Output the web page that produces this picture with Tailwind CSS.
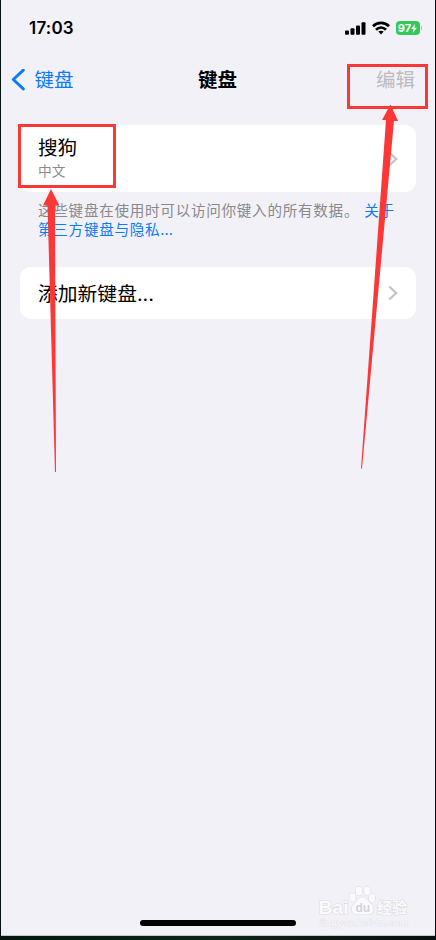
<!DOCTYPE html>
<html lang="zh-CN">
<head>
<meta charset="utf-8">
<title>键盘</title>
<script src="https://cdn.jsdelivr.net/npm/@tailwindcss/browser@4"></script>
</head>
<body class="w-[436px] h-[940px] overflow-hidden bg-[#07110f] font-['Inter','Noto_Sans_CJK_SC',sans-serif]">
<div class="relative flex flex-col w-[436px] h-[940px]">
  <main class="flex flex-col h-[936px] ml-px w-[434px] bg-[#f2f1f7] border-b border-[#c8c8cc]">
    <!-- Status bar -->
    <header class="flex items-center justify-between h-14 pl-[28px] pr-[13px]">
      <span class="text-[17px] leading-6 font-semibold tracking-[0.2px] text-black">17:03</span>
      <div class="flex items-center gap-[6px]">
        <svg class="w-[21px] h-[13px]" viewBox="0 0 21 13"><rect x="0" y="8.6" width="4" height="4.2" rx="1"/><rect x="5.5" y="6.2" width="4" height="6.6" rx="1"/><rect x="11" y="3.4" width="4" height="9.4" rx="1"/><rect x="16.5" y="0.3" width="4" height="12.5" rx="1"/></svg>
        <svg class="w-[18px] h-[14px]" viewBox="0 0 18 14" fill="none" stroke="#000" stroke-width="2.7"><path d="M1 5.2C5.5 .7 12.5 .7 17 5.2"/><path d="M4 8.7C7 5.8 11 5.8 14 8.700"/><path d="M9 13.4 6.3 10.6Q9 8.7 11.7 10.6Z" fill="#000" stroke="none"/></svg>
        <div class="flex items-center gap-px">
          <div class="flex items-center justify-center w-[24px] h-[14px] rounded-[4px] bg-[#34c759] text-white">
            <span class="text-[11px] leading-none font-bold">97</span>
            <svg class="w-[6px] h-[9px]" viewBox="0 0 6 9" fill="#fff"><path d="M4 0 .2 5h2.3L1.8 9 5.9 3.7H3.5Z"/></svg>
          </div>
          <span class="w-[1.5px] h-[4px] rounded-r bg-[#b5b5ba]"></span>
        </div>
      </div>
    </header>

    <!-- Navigation bar -->
    <nav class="grid grid-cols-3 items-center h-[48px] pl-[10px] pr-[20px] text-[19.5px] leading-6">
      <div class="flex items-center gap-[9.5px] text-[#0a7aff]">
        <svg class="w-[14px] h-[22px]" viewBox="0 0 14 22" fill="none" stroke="currentColor" stroke-width="2.9" stroke-linecap="round" stroke-linejoin="round"><path d="M12.3 1.1 2.3 10.500l10 9.400"/></svg>
        <span>键盘</span>
      </div>
      <h1 class="text-center font-bold text-black pl-[9px]">键盘</h1>
      <span class="text-right text-[#bcbbc0]">编辑</span>
    </nav>

    <!-- Settings list -->
    <section class="flex flex-col mt-[21px] ml-[19px] w-[396px]">
      <div class="flex items-center justify-between h-[67px] pl-[18px] pr-[18px] rounded-[11px] bg-white">
        <div class="flex flex-col">
          <span class="text-[19.6px] leading-[25px] text-black">搜狗</span>
          <span class="text-[13.7px] leading-[20px] text-[#8b8b8f]">中文</span>
        </div>
        <svg class="w-[10px] h-[16px]" viewBox="0 0 10 16" fill="none" stroke="#c4c4c7" stroke-width="2.3"><path d="M1.2 1.500 8.200 8l-7 6.500"/></svg>
      </div>
      <p class="pl-[18px] mt-[10px] text-[14.6px] leading-[18.5px] tracking-[0.7px] text-[#89898e] whitespace-nowrap">这些键盘在使用时可以访问你键入的所有数据。<span class="text-[#0a7aff] ml-[5px]">关于</span><br><span class="text-[#0a7aff]">第三方键盘与隐私<span class="tracking-normal">...</span></span></p>
      <div class="flex items-center justify-between h-[52px] mt-[28px] pl-[18px] pr-[18px] rounded-[11px] bg-white">
        <span class="pt-[2px] text-[19.8px] leading-6 text-black">添加新键盘...</span>
        <svg class="w-[10px] h-[16px]" viewBox="0 0 10 16" fill="none" stroke="#c4c4c7" stroke-width="2.3"><path d="M1.2 1.500 8.200 8l-7 6.500"/></svg>
      </div>
    </section>

    <!-- Home indicator -->
    <div class="mt-auto mb-[9px] ml-[139px] w-[156px] h-[6px] rounded-full bg-black"></div>
  </main>
  <div class="h-1 bg-linear-to-r from-[#04170c] via-[#102416] to-[#061010]"></div>

  <!-- Watermark -->
  <svg class="absolute left-[310px] top-[880px] w-[110px] h-[56px]" viewBox="0 0 110 56">
    <g fill="#fafafc" stroke="#dddce1" stroke-width="1.2" paint-order="stroke">
      <text x="8.5" y="34" font-family="Liberation Sans, sans-serif" font-weight="700" font-size="19" textLength="30" lengthAdjust="spacingAndGlyphs">Bai</text>
      <ellipse cx="42.5" cy="17.5" rx="3.2" ry="4.2"/><ellipse cx="49" cy="11" rx="3.3" ry="4.6"/><ellipse cx="57.3" cy="11" rx="3.3" ry="4.6"/><ellipse cx="62" cy="18" rx="3.2" ry="4.2"/>
      <path d="M52.5 17c-4 0-5 4-8.500 7.200-4 4-2.500 10 2.500 10h12c5 0 7-6 3-10C58 21 56.500 17 52.500 17Z"/>
      <text x="67" y="32.500" font-family="Noto Sans CJK SC, sans-serif" font-weight="700" font-size="15" textLength="30">经验</text>
      <text x="10" y="46" font-family="Liberation Sans, sans-serif" font-size="9" stroke-width=".7" textLength="88" lengthAdjust="spacingAndGlyphs">jingyan.baidu.com</text>
    </g>
    <text x="45.500" y="32" font-family="Liberation Sans, sans-serif" font-weight="700" font-size="12" fill="#d3d2d8">du</text>
  </svg>

  <!-- Annotations -->
  <svg class="absolute left-0 top-0 w-[436px] h-[940px]" viewBox="0 0 436 940">
    <g fill="none" stroke="#fb3838" stroke-width="3"><rect x="19.500" y="125.500" width="95" height="61"/><rect x="348.500" y="65.500" width="78" height="42"/></g>
    <g fill="#fb3838"><path d="M51 189 59.300 205.500H55L56 472H55L47.500 205.500H43Z"/><path d="M390.500 104.500 398 121H394L362 468.500H361L386 120H382Z"/></g>
  </svg>
</div>
</body>
</html>
